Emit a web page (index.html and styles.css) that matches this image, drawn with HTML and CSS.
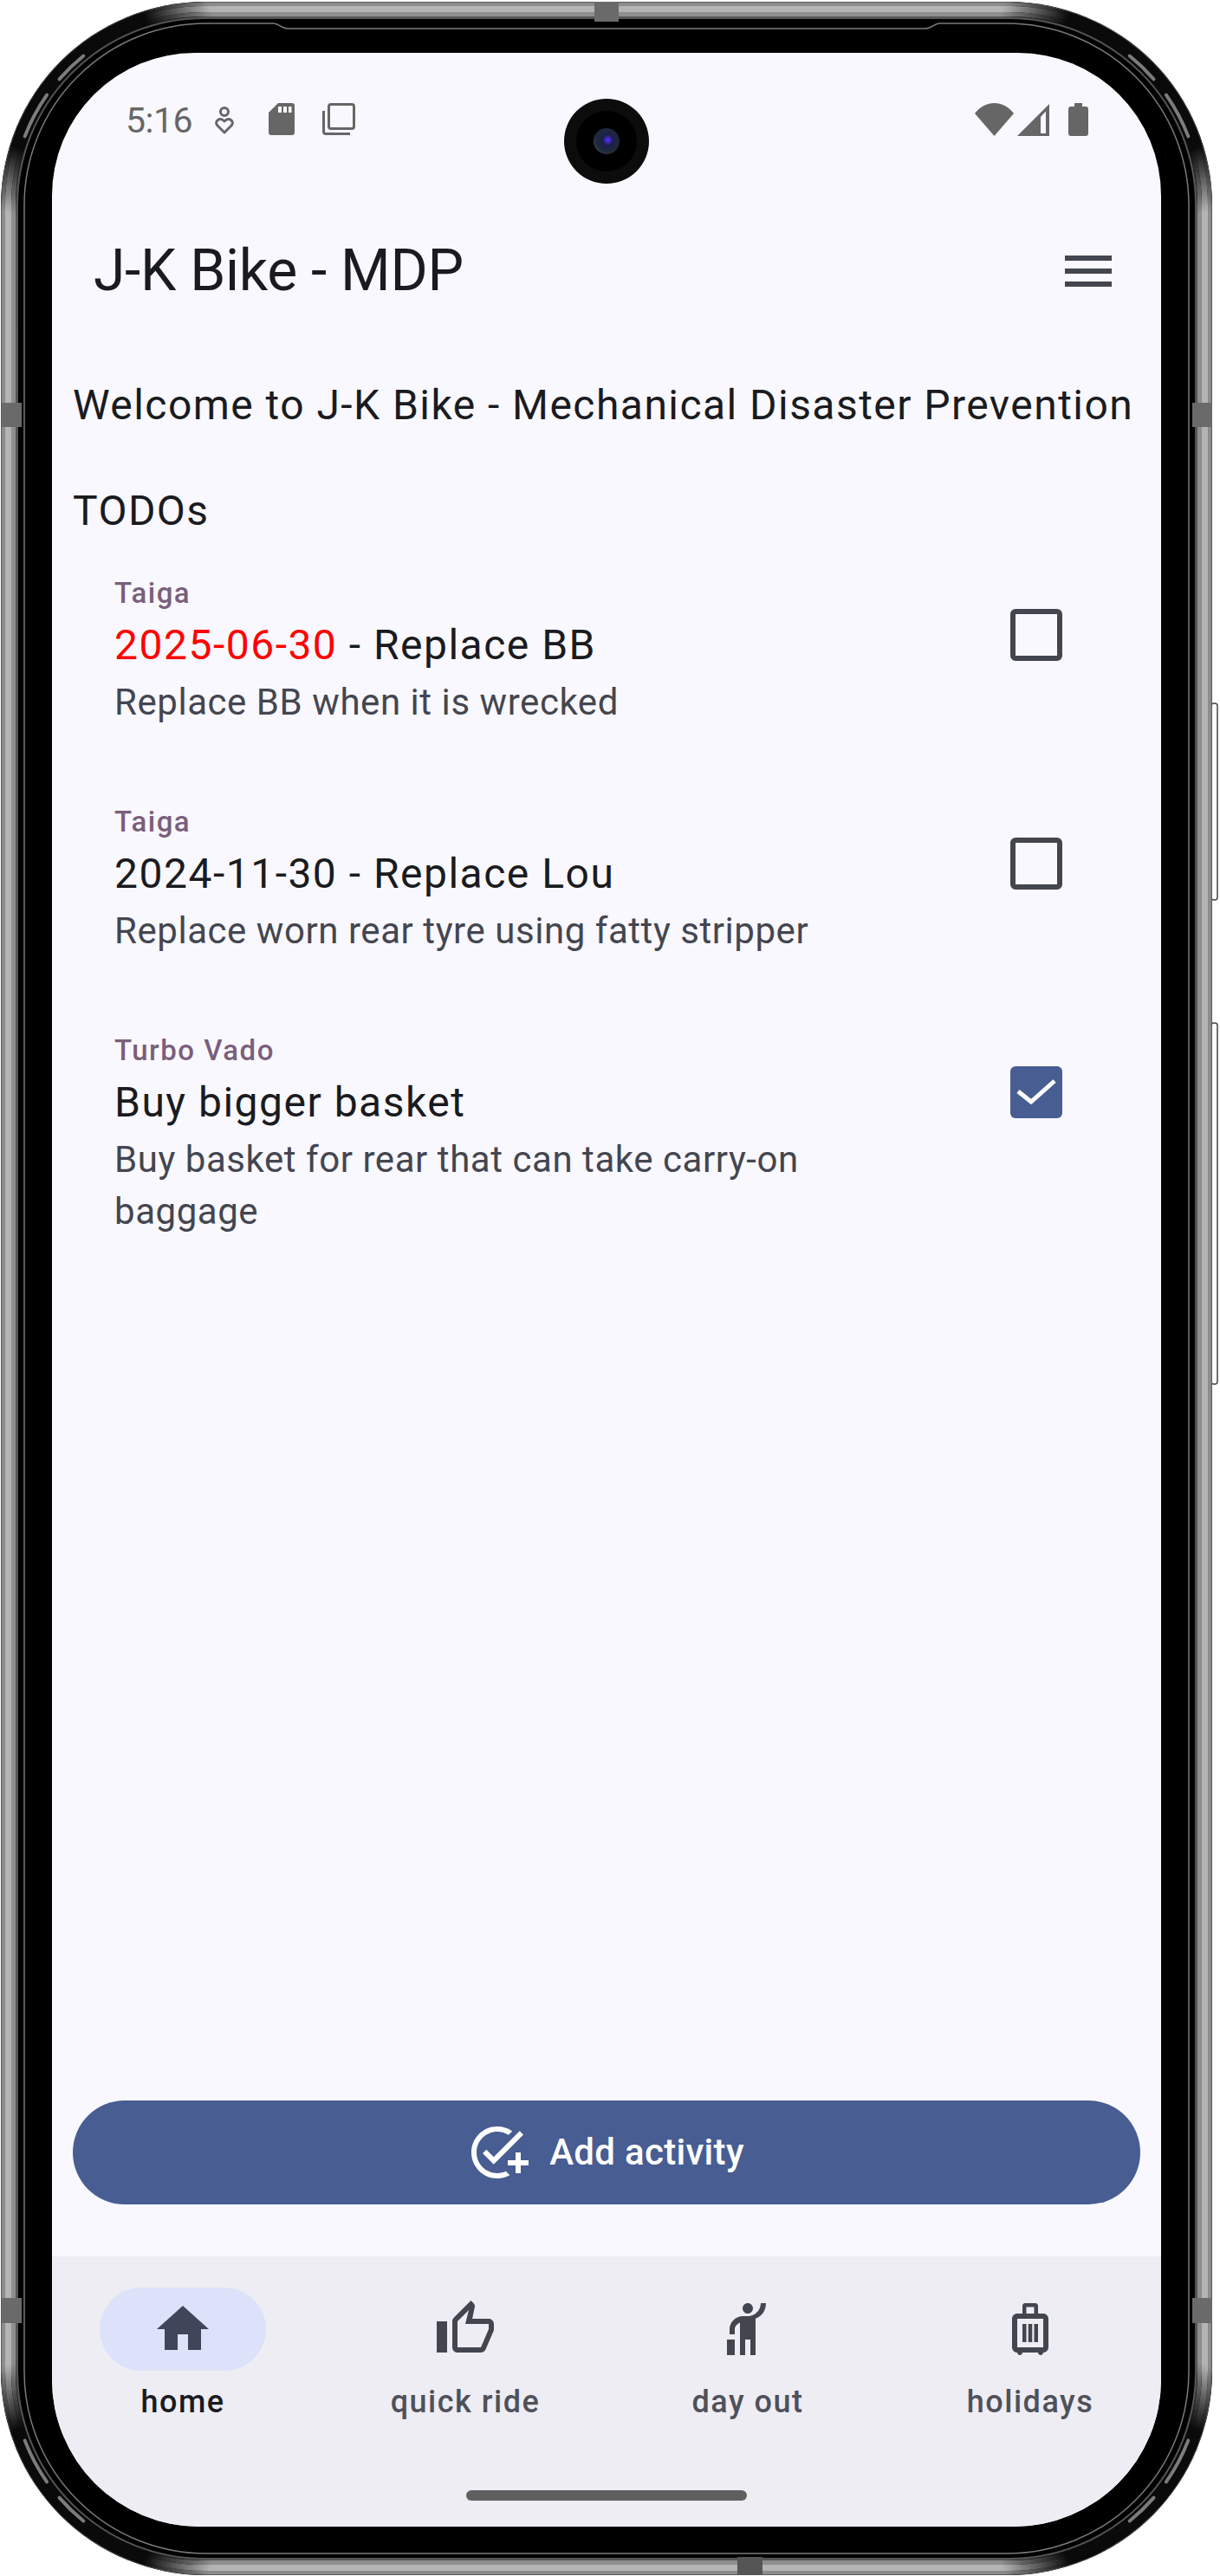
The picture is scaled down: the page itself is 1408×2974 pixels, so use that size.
FILE: index.html
```html
<!DOCTYPE html>
<html lang="en">
<head>
<meta charset="utf-8">
<title>J-K Bike - MDP</title>
<link rel="stylesheet" href="styles.css">
</head>
<body>
<div class="device">
  <svg class="frame" width="1408" height="2974" viewBox="0 0 1408 2974" fill="none" aria-hidden="true">
    <defs>
      <radialGradient id="cTL" gradientUnits="userSpaceOnUse" cx="68" cy="70" r="185"><stop offset="0.6" stop-color="#0a0a0a"/><stop offset="1" stop-color="#0a0a0a" stop-opacity="0"/></radialGradient>
      <radialGradient id="cTR" gradientUnits="userSpaceOnUse" cx="1332" cy="70" r="185"><stop offset="0.6" stop-color="#0a0a0a"/><stop offset="1" stop-color="#0a0a0a" stop-opacity="0"/></radialGradient>
      <radialGradient id="cBL" gradientUnits="userSpaceOnUse" cx="68" cy="2905" r="185"><stop offset="0.6" stop-color="#0a0a0a"/><stop offset="1" stop-color="#0a0a0a" stop-opacity="0"/></radialGradient>
      <radialGradient id="cBR" gradientUnits="userSpaceOnUse" cx="1332" cy="2905" r="185"><stop offset="0.6" stop-color="#0a0a0a"/><stop offset="1" stop-color="#0a0a0a" stop-opacity="0"/></radialGradient>
      <g id="gloss" stroke="#7c7c7c" stroke-width="4" stroke-linecap="round">
        <path d="M68.500 91.400A222 222 0 0 1 96.300 64.500"/>
        <path d="M28.700 157.400A222 222 0 0 1 54.100 109.700"/>
      </g>
    </defs>
    <rect x="1398" y="812" width="7" height="227" rx="3" fill="#fff" stroke="#444" stroke-width="1.500"/>
    <rect x="1398" y="1181" width="7" height="417" rx="3" fill="#fff" stroke="#444" stroke-width="1.500"/>
    <rect x="1" y="2" width="1398" height="2971" rx="235" fill="#000"/>
    <rect x="1.500" y="2.500" width="1397" height="2970" rx="234.500" stroke="#5a5a5a"/>
    <rect x="4" y="5" width="1392" height="2965" rx="232" stroke="#8c8c8c" stroke-width="4"/>
    <rect x="9.500" y="10.500" width="1381" height="2954" rx="226" stroke="#b4b4b4" stroke-width="7"/>
    <rect x="15.500" y="16.500" width="1369" height="2942" rx="220" stroke="#8e8e8e" stroke-width="5"/>
    <rect x="19.500" y="20.500" width="1361" height="2934" rx="216" stroke="#555" stroke-width="3"/>
    <rect x="10.500" y="11.500" width="1379" height="2952" rx="225" stroke="url(#cTL)" stroke-width="17"/>
    <rect x="10.500" y="11.500" width="1379" height="2952" rx="225" stroke="url(#cTR)" stroke-width="17"/>
    <rect x="10.500" y="11.500" width="1379" height="2952" rx="225" stroke="url(#cBL)" stroke-width="17"/>
    <rect x="10.500" y="11.500" width="1379" height="2952" rx="225" stroke="url(#cBR)" stroke-width="17"/>
    <use href="#gloss"/>
    <use href="#gloss" transform="translate(1400 0) scale(-1 1)"/>
    <use href="#gloss" transform="translate(0 2975) scale(1 -1)"/>
    <use href="#gloss" transform="translate(1400 2975) scale(-1 -1)"/>
    <path d="M28 237A210 210 0 0 1 238 27H316C322 27 324 33 332 33H1068C1076 33 1078 27 1084 27H1162A210 210 0 0 1 1372 237V2738A210 210 0 0 1 1162 2948H238A210 210 0 0 1 28 2738Z" stroke="#7a7a7a" stroke-width="1.500"/>
    <rect x="686" y="2" width="28" height="23" fill="#6a6a6a"/>
    <rect x="851" y="2952" width="29" height="21" fill="#555"/>
    <rect x="2" y="465" width="23" height="28" fill="#6a6a6a"/>
    <rect x="1376" y="465" width="23" height="28" fill="#6a6a6a"/>
    <rect x="2" y="2653" width="23" height="29" fill="#6a6a6a"/>
    <rect x="1376" y="2653" width="23" height="29" fill="#6a6a6a"/>
  </svg>

  <div class="screen">
    <div class="status-bar">
      <div class="status-left">
        <span class="clock">5:16</span>
        <svg class="st-wellbeing" width="22" height="32" viewBox="0 0 22 32" fill="none" stroke="#666" stroke-width="3"><circle cx="11" cy="6" r="4.500"/><path d="M11 30 2.500 21.500C-.5 17 5.500 11.500 11 17 16.500 11.500 22.500 17 19.500 21.500Z" stroke-linejoin="round"/></svg>
        <svg class="st-sd" width="30" height="37" viewBox="0 0 30 37"><path fill="#666" d="M11 0h16a3 3 0 0 1 3 3v31a3 3 0 0 1-3 3H3a3 3 0 0 1-3-3V11z"/><path fill="#f9f8ff" d="M11 4h4v7h-4zm6 0h4v7h-4zm6 0h3.500v7H23z"/></svg>
        <svg class="st-copy" width="38" height="37" viewBox="0 0 38 37" fill="none" stroke="#666" stroke-width="3"><rect x="7.500" y="1.500" width="29" height="28" rx="2.500"/><path d="M1.500 9v24a2.500 2.500 0 0 0 2.500 2.500h28"/></svg>
      </div>
      <div class="status-right">
        <svg width="45" height="38" viewBox="0 0 45 38"><path fill="#666" d="M0 12C12-4 33-4 45 12L22.500 38z"/></svg>
        <svg class="st-signal" width="37" height="37" viewBox="0 0 37 37"><path fill="#666" d="M37 0v37H0z"/><path fill="#f9f8ff" d="M27 15l6-6.500V34h-6z"/></svg>
        <svg class="st-batt" width="23" height="38" viewBox="0 0 23 38"><path fill="#666" d="M7 0h9v4h4a3 3 0 0 1 3 3v28a3 3 0 0 1-3 3H3a3 3 0 0 1-3-3V7a3 3 0 0 1 3-3h4z"/></svg>
      </div>
    </div>

    <header class="app-bar">
      <h1 class="app-title">J-K Bike - MDP</h1>
      <svg class="icon" width="72" height="72" viewBox="0 0 24 24"><path fill="#44464f" d="M3 18h18v-2H3v2zm0-5h18v-2H3v2zm0-7v2h18V6H3z"/></svg>
    </header>

    <main class="content">
      <p class="welcome">Welcome to J-K Bike - Mechanical Disaster Prevention</p>
      <p class="section">TODOs</p>
      <ul class="todo-list">
        <li class="todo">
          <div class="todo-text">
            <div class="overline">Taiga</div>
            <div class="headline"><span class="overdue">2025-06-30</span> - Replace BB</div>
            <div class="support">Replace BB when it is wrecked</div>
          </div>
          <div class="check-target"><span class="checkbox"></span></div>
        </li>
        <li class="todo">
          <div class="todo-text">
            <div class="overline">Taiga</div>
            <div class="headline">2024-11-30 - Replace Lou</div>
            <div class="support">Replace worn rear tyre using fatty stripper</div>
          </div>
          <div class="check-target"><span class="checkbox"></span></div>
        </li>
        <li class="todo">
          <div class="todo-text">
            <div class="overline">Turbo Vado</div>
            <div class="headline">Buy bigger basket</div>
            <div class="support">Buy basket for rear that can take carry-on baggage</div>
          </div>
          <div class="check-target">
            <span class="checkbox checked">
              <svg width="60" height="60" viewBox="0 0 60 60" fill="none"><path d="M9 29 24 41 51 17" stroke="#fff" stroke-width="5"/></svg>
            </span>
          </div>
        </li>
      </ul>
    </main>

    <button class="add-button" type="button">
      <svg class="icon" width="72" height="72" viewBox="0 0 24 24"><path fill="#fff" d="M22 5.180 10.590 16.600l-4.240-4.240 1.410-1.410 2.830 2.830 10-10L22 5.180zM12 20c-4.410 0-8-3.590-8-8s3.590-8 8-8c1.570 0 3.040.46 4.280 1.250l1.450-1.450C16.100 2.670 14.130 2 12 2 6.480 2 2 6.480 2 12s4.480 10 10 10c1.730 0 3.360-.44 4.780-1.220l-1.500-1.500C14.280 19.740 13.170 20 12 20zm7-5h-3v2h3v3h2v-3h3v-2h-3v-3h-2v3z"/></svg>
      <span>Add activity</span>
    </button>

    <nav class="nav-bar">
      <div class="nav-item active">
        <div class="nav-pill"><svg class="icon" width="72" height="72" viewBox="0 0 24 24"><path fill="#404659" d="M10 20v-6h4v6h5v-8h3L12 3 2 12h3v8z"/></svg></div>
        <div class="nav-label">home</div>
      </div>
      <div class="nav-item">
        <div class="nav-pill"><svg class="icon" width="72" height="72" viewBox="0 0 24 24"><path fill="#44464f" d="M9 21h9c.83 0 1.540-.5 1.840-1.220l3.020-7.050c.09-.23.14-.47.14-.73v-2c0-1.100-.9-2-2-2h-6.310l.95-4.570.03-.32c0-.41-.17-.79-.44-1.060L14.170 1 7.580 7.590C7.220 7.950 7 8.450 7 9v10c0 1.100.9 2 2 2zM9 9l4.340-4.340L12 10h9v2l-3 7H9V9zM1 9h4v12H1z"/></svg></div>
        <div class="nav-label">quick ride</div>
      </div>
      <div class="nav-item">
        <div class="nav-pill"><svg class="icon" width="72" height="72" viewBox="0 0 24 24"><path fill="#44464f" d="M12 6c-1.100 0-2-.9-2-2s.9-2 2-2 2 .9 2 2-.9 2-2 2zm5-4h2c0 2.970-1.750 5.200-4 5.900V22h-2v-6h-2v6H9V9.500c-.9.4-2 1.300-2 2.500v2H5v-2c0-2.760 2.500-5 5-5h2c2.760 0 5-2.240 5-5zM4 16h3v6H4z"/></svg></div>
        <div class="nav-label">day out</div>
      </div>
      <div class="nav-item">
        <div class="nav-pill"><svg class="icon" width="72" height="72" viewBox="0 0 24 24"><path fill="#44464f" d="M17 6h-2V3c0-.55-.45-1-1-1h-4c-.55 0-1 .45-1 1v3H7c-1.100 0-2 .9-2 2v11c0 1.100.9 2 2 2 0 .55.45 1 1 1s1-.45 1-1h6c0 .55.45 1 1 1s1-.45 1-1c1.100 0 2-.9 2-2V8c0-1.100-.9-2-2-2zM10.500 3.500h3V6h-3V3.500zM17 19H7V8h10v11zM9 10h1.500v7H9zm4.500 0H15v7h-1.500zm-2.250 0h1.500v7h-1.500z"/></svg></div>
        <div class="nav-label">holidays</div>
      </div>
    </nav>

    <div class="home-indicator"></div>
    <div class="camera"><div class="camera-inner"><div class="camera-lens"></div></div></div>
  </div>
</div>
</body>
</html>
```

FILE: styles.css
```css
* { box-sizing: border-box; }

html, body {
  margin: 0;
  padding: 0;
  background: #fff;
}

body {
  font-family: Roboto, "Liberation Sans", sans-serif;
  width: 1408px;
  height: 2974px;
  overflow: hidden;
}

.device {
  position: relative;
  width: 1408px;
  height: 2974px;
  padding: 61px 68px 57px 60px;
  display: flex;
}

.frame {
  position: absolute;
  left: 0;
  top: 0;
}

.icon { display: block; flex: none; }

.screen {
  position: relative;
  flex: 1;
  display: flex;
  flex-direction: column;
  background: #f9f8ff;
  border-radius: 165px 165px 170px 170px;
  overflow: hidden;
}

/* status bar */
.status-bar {
  height: 156px;
  padding: 58px 84px 0 85px;
  display: flex;
  justify-content: space-between;
  align-items: flex-start;
  color: #666;
}

.status-left, .status-right { display: flex; align-items: flex-start; }

.clock {
  font-size: 41px;
  line-height: 40px;
  letter-spacing: -.5px;
  width: 78px;
  margin-right: 25px;
}

.st-wellbeing { margin-top: 4px; margin-right: 40px; }
.st-sd { margin-right: 32px; }
.st-signal { margin: 1px 0 0 4px; }
.st-batt { margin-left: 22px; }

/* app bar */
.app-bar {
  height: 192px;
  padding: 0 48px;
  display: flex;
  align-items: center;
  justify-content: space-between;
}

.app-title {
  margin: 0;
  font-size: 66px;
  font-weight: 400;
  letter-spacing: -.3px;
  color: #1a1b20;
  line-height: 84px;
}

/* content */
.content {
  flex: 1;
  padding: 23px 24px 0;
}

.welcome, .section {
  margin: 0;
  font-size: 48px;
  line-height: 72px;
  letter-spacing: 1.450px;
  color: #1a1b20;
}

.section { margin-top: 50px; }

.todo-list {
  list-style: none;
  margin: 35px 0 0;
  padding: 0;
}

.todo {
  display: flex;
  gap: 48px;
  padding: 0 48px 84px;
  align-items: flex-start;
}

.todo-text { flex: 1; min-width: 0; }

.overline {
  font-size: 33px;
  font-weight: 500;
  line-height: 48px;
  letter-spacing: 1.500px;
  color: #7a5f7b;
}

.headline {
  font-size: 48px;
  line-height: 72px;
  letter-spacing: 1.500px;
  color: #1a1b20;
}

.overdue { color: #f00; }

.support {
  font-size: 42px;
  line-height: 60px;
  letter-spacing: .55px;
  color: #44464f;
}

.check-target {
  width: 144px;
  height: 144px;
  flex: none;
  display: flex;
  align-items: center;
  justify-content: center;
}

.checkbox {
  display: block;
  width: 60px;
  height: 60px;
  border: 6px solid #44464f;
  border-radius: 6px;
}

.checkbox.checked {
  background: #485d92;
  border: 0;
}

.checkbox svg { display: block; }

/* add button */
.add-button {
  height: 120px;
  margin: 0 24px 60px;
  border: 0;
  border-radius: 60px;
  background: #485d92;
  color: #fff;
  font: 500 42px/60px Roboto, sans-serif;
  letter-spacing: .3px;
  display: flex;
  align-items: center;
  justify-content: center;
  gap: 24px;
  padding: 0 3px 0 0;
}

/* nav */
.nav-bar {
  height: 312px;
  background: #eeedf4;
  padding-top: 36px;
  display: grid;
  grid-template-columns: repeat(4, 302px);
  column-gap: 24px;
  align-items: start;
}

.nav-item {
  display: flex;
  flex-direction: column;
  align-items: center;
}

.nav-pill {
  width: 192px;
  height: 96px;
  border-radius: 48px;
  display: flex;
  align-items: center;
  justify-content: center;
}

.active .nav-pill { background: #dce2f9; }

.nav-label {
  margin-top: 12px;
  font-size: 36px;
  font-weight: 500;
  line-height: 48px;
  letter-spacing: 1.500px;
  color: #4f515a;
}

.active .nav-label { color: #1a1b20; }

.home-indicator {
  position: absolute;
  left: 478px;
  bottom: 30px;
  width: 324px;
  height: 12px;
  border-radius: 6px;
  background: #5f5f5f;
}

/* camera */
.camera {
  position: absolute;
  left: 591px;
  top: 53px;
  width: 98px;
  height: 98px;
  border-radius: 50%;
  background: #0c0c0c;
  display: flex;
  align-items: center;
  justify-content: center;
}

.camera-inner {
  width: 70px;
  height: 70px;
  border-radius: 50%;
  background: #000;
  display: flex;
  align-items: center;
  justify-content: center;
}

.camera-lens {
  width: 30px;
  height: 30px;
  border-radius: 50%;
  background: radial-gradient(circle at 55% 45%, #4a2be0 0 8%, #1d1f4c 25%, #1d2a3a 60%, #55565a 90%);
}
```
